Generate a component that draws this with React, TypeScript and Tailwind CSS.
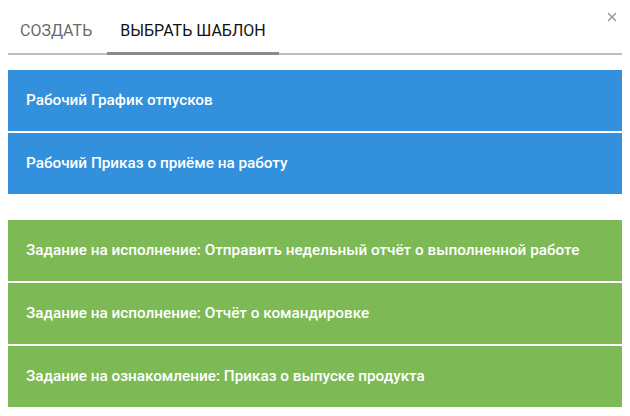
import { X } from "lucide-react";

const templates = [
  { title: "Рабочий График отпусков", kind: "doc" },
  { title: "Рабочий Приказ о приёме на работу", kind: "doc" },
];

const tasks = [
  "Задание на исполнение: Отправить недельный отчёт о выполненной работе",
  "Задание на исполнение: Отчёт о командировке",
  "Задание на ознакомление: Приказ о выпуске продукта",
];

export default function App() {
  return (
    <div
      className="w-[630px] h-[416px] bg-white px-2 relative"
      style={{ fontFamily: "Roboto, 'Liberation Sans', sans-serif" }}
    >
      <button className="absolute right-[11px] top-[10px] text-[#a0a0a0]">
        <X size={14} strokeWidth={3} />
      </button>

      <div className="flex border-b-2 border-[#bdbdbd] h-[55px] pt-[20px]">
        <div className="px-3 text-[16px] text-[#6b6b6b] uppercase leading-[22px]">
          Создать
        </div>
        <div className="ml-[3px] px-[13px] text-[16px] text-[#111] uppercase leading-[22px] border-b-[3px] border-[#8a8a8a] -mb-[2px] h-[35px]">
          Выбрать шаблон
        </div>
      </div>

      <div className="mt-[15px] flex flex-col gap-[2px]">
        {templates.map((t) => (
          <div
            key={t.title}
            className="h-[61px] bg-[#3390dc] text-white text-[15.3px] font-medium flex items-center px-[18px]"
          >
            {t.title}
          </div>
        ))}
      </div>

      <div className="mt-[26px] flex flex-col gap-[2px]">
        {tasks.map((t) => (
          <div
            key={t}
            className="h-[61px] bg-[#7db954] text-white text-[15.3px] font-medium flex items-center px-[18px]"
          >
            {t}
          </div>
        ))}
      </div>
    </div>
  );
}
